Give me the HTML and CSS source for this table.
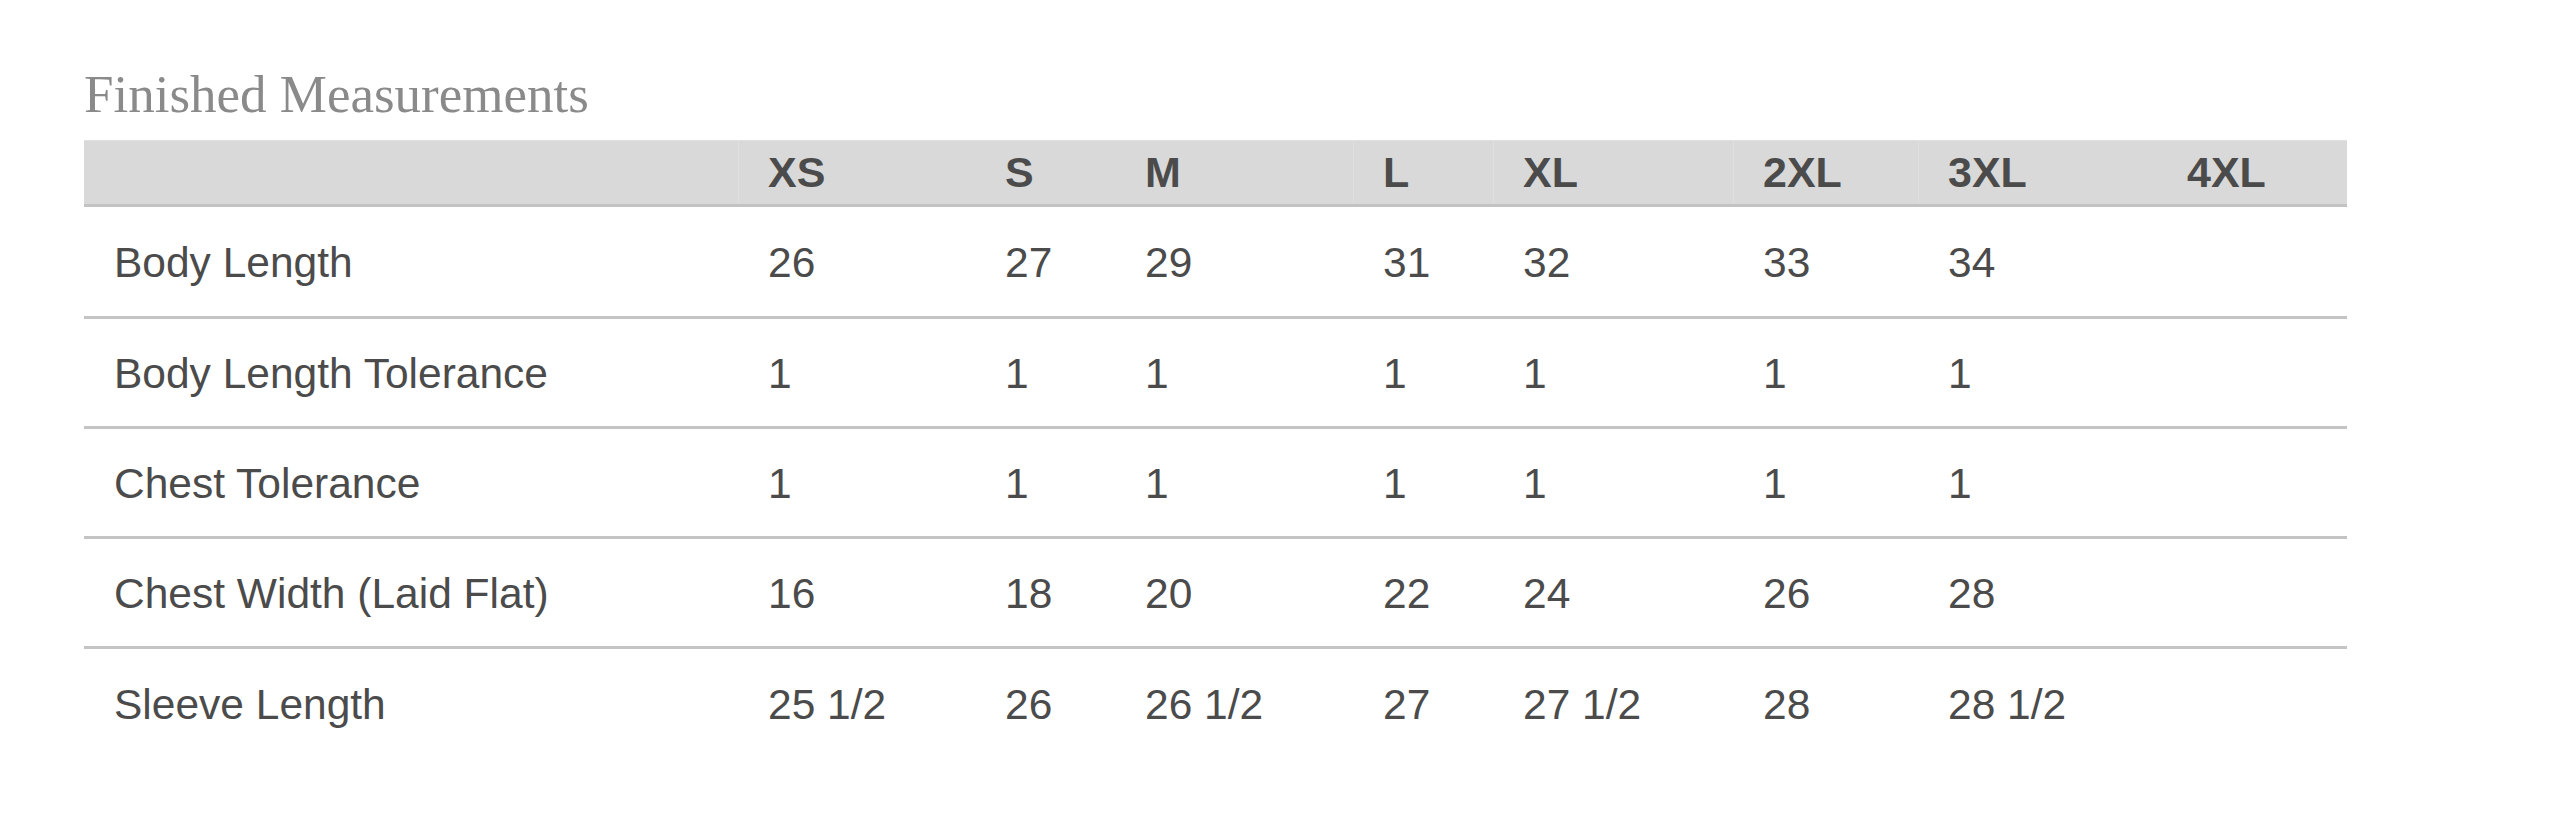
FILE: index.html
```html
<!DOCTYPE html>
<html lang="en">
<head>
<meta charset="utf-8">
<title>Finished Measurements</title>
<link rel="stylesheet" href="styles.css">
</head>
<body>
<main class="page">
  <h2 class="title">Finished Measurements</h2>
  <table class="sizes">
    <colgroup>
      <col class="c-label"><col class="c-xs"><col class="c-s"><col class="c-m"><col class="c-l"><col class="c-xl"><col class="c-2xl"><col class="c-3xl"><col class="c-4xl">
    </colgroup>
    <thead>
      <tr>
        <th></th>
        <th class="sep">XS</th>
        <th>S</th>
        <th>M</th>
        <th class="sep">L</th>
        <th class="sep">XL</th>
        <th class="sep">2XL</th>
        <th class="sep">3XL</th>
        <th>4XL</th>
      </tr>
    </thead>
    <tbody>
      <tr><td>Body Length</td><td>26</td><td>27</td><td>29</td><td>31</td><td>32</td><td>33</td><td>34</td><td></td></tr>
      <tr><td>Body Length Tolerance</td><td>1</td><td>1</td><td>1</td><td>1</td><td>1</td><td>1</td><td>1</td><td></td></tr>
      <tr><td>Chest Tolerance</td><td>1</td><td>1</td><td>1</td><td>1</td><td>1</td><td>1</td><td>1</td><td></td></tr>
      <tr><td>Chest Width (Laid Flat)</td><td>16</td><td>18</td><td>20</td><td>22</td><td>24</td><td>26</td><td>28</td><td></td></tr>
      <tr><td>Sleeve Length</td><td>25 1/2</td><td>26</td><td>26 1/2</td><td>27</td><td>27 1/2</td><td>28</td><td>28 1/2</td><td></td></tr>
    </tbody>
  </table>
</main>
</body>
</html>
```
FILE: styles.css
```css
html, body {
  margin: 0;
  padding: 0;
  background: #ffffff;
}

.page {
  padding: 68px 0 0 84px;
}

.title {
  margin: 0 0 19px 0;
  font-family: "Liberation Serif", "Times New Roman", serif;
  font-weight: normal;
  font-size: 53px;
  line-height: 53px;
  color: #8a8a8a;
}

.sizes {
  width: 2263px;
  table-layout: fixed;
  border-collapse: separate;
  border-spacing: 0;
  font-family: "Liberation Sans", Arial, sans-serif;
  color: #4b4b4b;
}

.c-label { width: 654px; }
.c-xs { width: 237px; }
.c-s { width: 140px; }
.c-m { width: 238px; }
.c-l { width: 140px; }
.c-xl { width: 240px; }
.c-2xl { width: 185px; }
.c-3xl { width: 239px; }
.c-4xl { width: 190px; }

.sizes th {
  box-sizing: border-box;
  height: 67px;
  padding: 0 0 0 30px;
  text-align: left;
  vertical-align: middle;
  font-size: 43px;
  font-weight: bold;
  background: #d9d9d9;
  border-top: 1px solid #e0e0e0;
  border-bottom: 3px solid #c3c3c3;
  white-space: nowrap;
}

.sizes th.sep {
  box-shadow: inset 1px 0 0 #dfdfdf;
}

.sizes td {
  box-sizing: border-box;
  height: 110px;
  padding: 2px 0 0 30px;
  text-align: left;
  vertical-align: middle;
  font-size: 42.5px;
  border-bottom: 3px solid #c4c4c4;
  white-space: nowrap;
}

.sizes tbody tr:first-child td {
  height: 112px;
}

.sizes tbody tr:last-child td {
  border-bottom: none;
}
```
